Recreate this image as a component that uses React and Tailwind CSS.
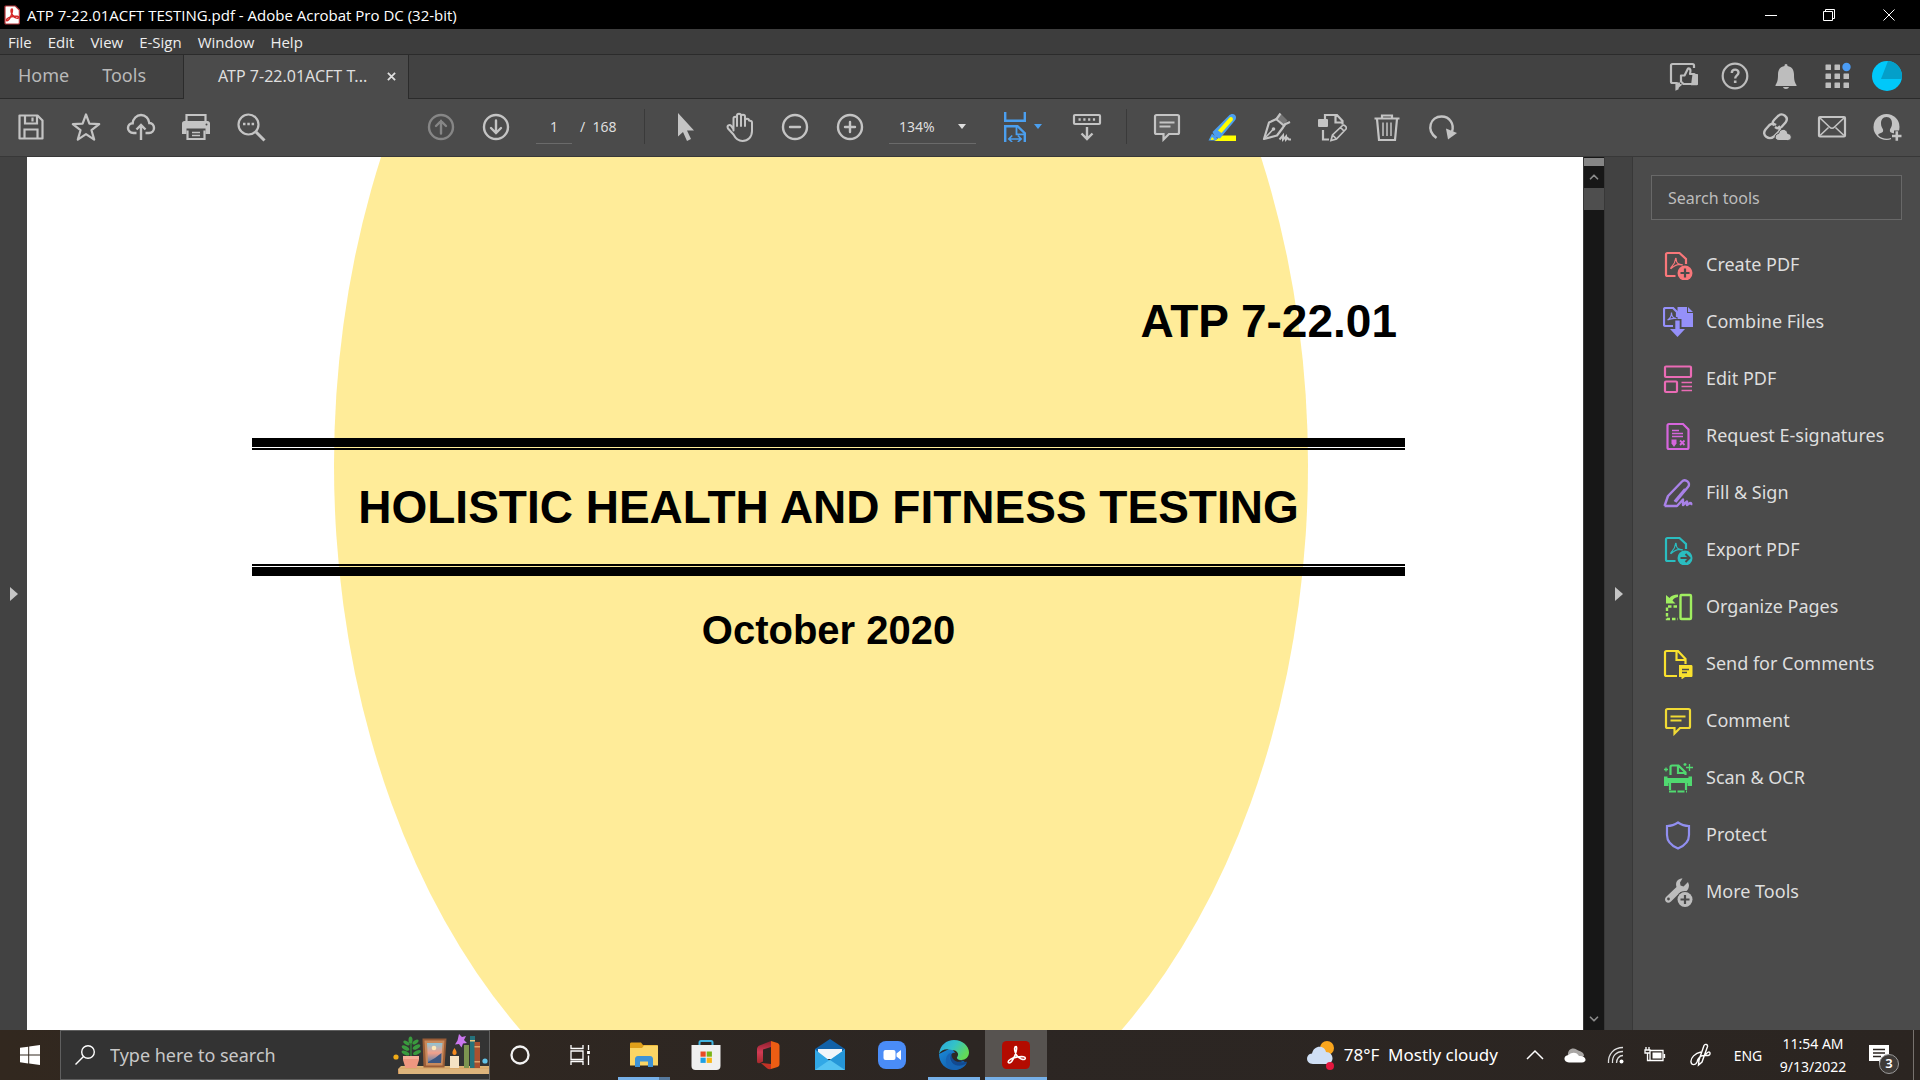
import React, { useState } from 'react';
import { ChevronUp, ChevronDown } from 'lucide-react';

const Icon = ({ children, className = 'h-[30px] w-[30px]' }) => (
  <svg viewBox="0 0 30 30" fill="none" stroke="currentColor" strokeWidth="2.200" className={`shrink-0 ${className}`} aria-hidden="true">
    {children}
  </svg>
);

// Acrobat "A" swoosh, reused by several icons
const Swoosh = ({ color = 'currentColor', width = 1.5 }) => (
  <path
    d="M15 6c-1.800 0-1.800 3-.8 6 .8 3 3.500 6 6.500 7.300 2.500 1 4.300.5 4.300-.8 0-1.600-3-2-6.500-1.600-4 .4-8 1.600-10 3-2.300 1.500-2.300 3.600-.8 3.600 2 0 4.800-4.500 6.300-8.500 1.500-3.800 2.300-9 1-9z"
    stroke={color}
    strokeWidth={width}
    fill="none"
  />
);

/* ---------- toolbar icons ---------- */

const SaveIcon = () => (
  <Icon>
    <path d="M3.500 3.500h18l5 5v18h-23z" strokeLinejoin="round" />
    <path d="M9 4v7.500h12V4M8.500 26v-8.500h13V26" />
    <path d="M16.500 5.500v4" />
  </Icon>
);

const StarIcon = () => (
  <Icon>
    <path d="M15 2.500l3.400 9.200 9.800.4-7.700 6.100 2.700 9.400-8.200-5.400-8.200 5.400 2.700-9.400-7.700-6.100 9.800-.4z" strokeLinejoin="round" />
  </Icon>
);

const CloudUpIcon = () => (
  <Icon>
    <path d="M10.500 21H7.500C4 21 2 18.500 2 16s2-4.800 4.700-4.800C7 7 10.500 3 15 3s8 3.500 8.300 8c3 .2 4.700 2.500 4.700 5s-2 5-5 5h-3.500" strokeWidth="2.400" />
    <path d="M15 28V13M10.500 17.500L15 13l4.500 4.500" strokeWidth="2.400" />
  </Icon>
);

const PrintIcon = () => (
  <Icon>
    <path d="M5.500 9V3h19v6" />
    <path d="M1 11.500C1 10 2 9 3.500 9h23c1.500 0 2.500 1 2.500 2.500V22h-4.500v-5.500h-19V22H1z" fill="currentColor" stroke="none" />
    <path d="M6.500 18.500v8.500h17v-8.500" />
    <path d="M11 20.500h8M11 23.500h8" strokeWidth="1.500" />
    <circle cx="25.500" cy="12.500" r="1" fill="#4b4b4b" stroke="none" />
  </Icon>
);

const FindIcon = () => (
  <Icon>
    <circle cx="12.500" cy="12.500" r="10" />
    <path d="M20 20l8.500 8.500" strokeWidth="3" />
    <path d="M7 12h2.500M11.300 12h2.500M15.600 12h2.500" strokeWidth="2.400" />
  </Icon>
);

const CircleIcon = ({ d }) => (
  <Icon>
    <circle cx="15" cy="15" r="12" strokeWidth="2.400" />
    <path d={d} strokeWidth="2.400" strokeLinecap="round" />
  </Icon>
);

const ArrowIcon = () => (
  <Icon>
    <path d="M8 1v23.500l5-4.500 4 9 4-2-4-8.500h7z" fill="currentColor" stroke="none" />
  </Icon>
);

const HandIcon = () => (
  <Icon>
    <path
      d="M8.500 18.500V6.500c0-2.500 3.500-2.500 3.500 0V14M12 7V3.500c0-2.500 4-2.500 4 0V14M16 4.500c0-2.500 4-2.300 4 0V14M20 8.500c0-2.300 4-2.300 4 0C24.500 9 27 8 27 10.500V19c0 6-4 10-9.500 10-5 0-7-2.500-9-6.500L3 16.500c-1.500-3 1.500-4.500 3.300-2.500l2.200 3.500"
      strokeLinecap="round"
      strokeLinejoin="round"
      strokeWidth="2"
    />
  </Icon>
);

const FitWidthIcon = () => (
  <svg viewBox="0 0 22 30" fill="none" stroke="currentColor" className="h-[30px] w-[22px] shrink-0" aria-hidden="true">
    <path d="M1.200 0v8.800h19.600V0" strokeWidth="2.400" />
    <path d="M1.200 30V14.200h12.300l7.300 7V30" strokeWidth="2.400" />
    <path d="M12.500 14.500v7.800h8" strokeWidth="1.800" />
    <path d="M5 27h12M8.200 23.500L4.800 27l3.400 3M13.800 23.500l3.400 3.500-3.400 3" strokeWidth="1.600" />
  </svg>
);

const ScrollModeIcon = () => (
  <Icon>
    <rect x="2" y="3" width="26" height="9" rx="1" />
    <path d="M6.500 7.500h18" strokeDasharray="2.200 2.600" strokeWidth="2.400" />
    <path d="M15 15v12M9.500 21.500L15 27l5.500-5.500" strokeWidth="2.400" />
  </Icon>
);

const CommentIcon = ({ fill = 'none' }) => (
  <Icon>
    <path d="M3 4.500C3 3.700 3.500 3 4.500 3h21c1 0 1.500.7 1.500 1.500v16c0 .8-.5 1.500-1.500 1.500H17l-5.500 5.500V22h-7C3.500 22 3 21.300 3 20.500z" fill={fill} />
    <path d="M7.500 10.500h15M7.500 14.500h11" strokeWidth="1.800" />
  </Icon>
);

const HighlightIcon = () => (
  <Icon>
    <path d="M7 29l8-5.500h14V29z" fill="#ffff00" stroke="none" />
    <path d="M1.500 28.500L5 21.500l5.500 5-2 2z" fill="#4b9fef" stroke="none" />
    <path d="M5.500 20L22 3.500c2-2 4.500-2 6-.5s1.500 4-.5 6L13 26.500 8 25z" fill="#4b9fef" stroke="none" />
    <path d="M11 18.500L22.500 5.500c1.500-1.500 4.500.5 3 3L14.500 21z" fill="#ffff00" stroke="none" />
    <path d="M3.500 28l1.500-3 2.500 2.500z" fill="#ffff00" stroke="none" />
  </Icon>
);

const PenNibIcon = () => (
  <Icon>
    <path d="M18.500 1.500l7 7-3.500 4.500-7-7z" fill="#767676" stroke="none" />
    <path d="M18.500 1.500L14.500 7 7 10.500 2 27l13-3.500 6-8 2-3.500" strokeLinejoin="round" />
    <path d="M13.500 6.500l9.500 8M22.500 12.500L28 10" />
    <path d="M3 26l8-8.500" strokeWidth="1.600" />
    <circle cx="11.500" cy="17" r="1.800" fill="currentColor" stroke="none" />
    <path d="M17.500 27.500l3.500-4v4l3-3v3l1.500-1.500 1.500 1.500H29" strokeWidth="2" />
  </Icon>
);

const EditPageIcon = () => (
  <Icon>
    <path d="M8 7V3h12l5.500 6v3.500M18.500 3v7.500H26" />
    <rect x="1" y="7" width="10" height="8" rx="1" fill="currentColor" stroke="none" />
    <path d="M6 18v9.500h6" />
    <path d="M14 28.500l1.500-5.500L25.500 13.500c1.500-1.500 5 2 3.500 3.500L19.500 27zM15.500 23l4 4M23.500 15.500l3.500 3.500" strokeWidth="1.700" />
  </Icon>
);

const TrashIcon = () => (
  <Icon>
    <path d="M2.500 6.500h25M10 6V3.500h10V6M5 7l2 21h16l2-21" />
    <path d="M11 10.500v13.500M15 10.500v13.500M19 10.500v13.500" strokeWidth="1.500" />
  </Icon>
);

const RotateIcon = () => (
  <Icon>
    <path d="M9.500 26C-1.500 18 3.500 4.500 14.500 4.500c8.500 0 13 8 10.500 15" strokeWidth="2.400" />
    <path d="M19 16.500l11 4.500-9 6.500z" fill="currentColor" stroke="none" />
  </Icon>
);

const LinkCloudIcon = () => (
  <Icon>
    <g strokeWidth="2.400" strokeLinejoin="round">
      <path d="M12 13.500c-2-2-1-4.500.5-6L16 4c4.500-4 11.500 1 7.500 6.500L19.500 15c-1.800 1.700-4.500 1.500-6.500 0" />
      <path d="M16.500 14c2 2 1.500 4.500 0 6L12 24.500C7 28.500-1 23.500 3.500 17.500L7.500 13c2-1.800 4.500-1.500 6.500 0" />
    </g>
    <path d="M17 28.500c-5 0-5-6.500-.3-7 1-5.500 8.300-5.500 9 0 5 .5 4.500 7 0 7z" fill="currentColor" stroke="#4b4b4b" strokeWidth="1" />
  </Icon>
);

const MailIcon = () => (
  <Icon>
    <rect x="2" y="5" width="26" height="19.500" rx="1" />
    <path d="M3 6l9.500 9c1.500 1.500 3.500 1.500 5 0L27 6M3 23.500l8.500-8M27 23.500l-8.500-8" strokeWidth="1.600" />
  </Icon>
);

const AddPersonIcon = () => (
  <Icon>
    <circle cx="14.500" cy="15" r="13" fill="currentColor" stroke="none" />
    <path d="M14.500 5c-4 0-5.500 3-5.500 6.500 0 3 1.300 4.500 2 6 .3 1.500 0 2.500-1 3-1.500.8-3.500 1-4 2.500 4.500 5 13.500 5 17 0-.5-1.500-2.500-1.700-4-2.500-1-.5-1.300-1.500-1-3 .7-1.500 2-3 2-6C20 8 18.500 5 14.500 5z" fill="#4b4b4b" stroke="none" />
    <path d="M19 24.500h12M25 18.500v12" stroke="#4b4b4b" strokeWidth="6" />
    <path d="M20 24h9.500M24.800 19.300v9.500" strokeWidth="2.600" />
  </Icon>
);

/* ---------- header icons ---------- */

const FeedbackIcon = () => (
  <Icon>
    <path d="M11 22.500H8.500v5l-1 .5V22H3.500C2.500 22 2 21.500 2 20.500v-16C2 3.500 2.500 3 3.500 3h20c1 0 1.500.5 1.500 1.500V7" />
    <path d="M7.500 22v6.500l6-5" fill="currentColor" stroke="none" />
    <path d="M12 14.500h3.500L19 7.500c2.500-.5 3 1.500 2 5.500h4c1 0 1 1 1 2l-1.500 8H14.500L12 20.500z" strokeLinejoin="round" />
    <path d="M23.500 13H28c.8 0 1 .5 1 1v9c0 .8-.5 1.200-1 1.200h-6z" fill="currentColor" stroke="none" />
  </Icon>
);

const HelpIcon = () => (
  <Icon>
    <circle cx="15" cy="15" r="12.300" />
    <path d="M11.800 12c0-4.500 6.700-4.200 6.700-.5 0 3-3.300 2.700-3.300 6" strokeWidth="2.400" />
    <path d="M15.200 19.500V22" strokeWidth="2.600" />
  </Icon>
);

const BellIcon = () => (
  <Icon>
    <path d="M15 3c1.200 0 1.500.8 1.500 2 4.500.8 6.500 4 6.500 8.500 0 5 .5 7.500 2.500 10.500v1h-21v-1C6.500 21 7 18.500 7 13.500 7 9 9 5.800 13.500 5c0-1.200.3-2 1.500-2zM12 26h6c-.5 2.500-5.500 2.500-6 0z" fill="currentColor" stroke="none" />
  </Icon>
);

const AppsIcon = () => (
  <Icon>
    {[3.5, 12.5, 21.5].map((y) =>
      [3.5, 12.5, 21.5].map((x) => (
        <rect key={`${x}-${y}`} x={x} y={y} width="5.500" height="5.500" rx="0.500" fill="currentColor" stroke="none" />
      ))
    )}
    <circle cx="24.500" cy="6" r="5" fill="#424242" stroke="none" />
    <circle cx="24.500" cy="6" r="4.200" fill="#4b9cf5" stroke="none" />
  </Icon>
);

/* ---------- tools panel icons ---------- */

const PdfPage = () => (
  <>
    <path d="M12.500 26H4.500C3.500 26 3 25.500 3 24.500v-20C3 3.500 3.500 3 4.500 3h12L23 9v5" />
    <path d="M8 18.500c-1.500-.5 4-3.500 4.500-9.500 0-1 .8-.8.700.5 0 4 3 5.500 6.500 5.300-3-1-8 .5-11.700 3.700z" strokeWidth="1.200" />
  </>
);

const CreatePdfIcon = () => (
  <Icon>
    <PdfPage />
    <circle cx="22" cy="23" r="7.500" fill="currentColor" stroke="none" />
    <path d="M17.500 23h9M22 18.500v9" stroke="#4b4b4b" />
  </Icon>
);

const ExportPdfIcon = () => (
  <Icon>
    <PdfPage />
    <circle cx="22" cy="23" r="7.500" fill="currentColor" stroke="none" />
    <path d="M17.500 23h8.500M22.500 19l4 4-4 4" stroke="#4b4b4b" strokeWidth="2" />
  </Icon>
);

const CombineIcon = () => (
  <Icon>
    <path d="M10 19H2.500C1.500 19 1 18.500 1 17.500v-15C1 1.500 1.500 1 2.500 1H10l4 4v5" />
    <path d="M4.500 13c3-1.500 4-4 4-7.500 0 3.500 2 6 5 6-3-.5-6 0-9 1.500z" strokeWidth="1.200" />
    <path d="M14.500 0H24v6h6v14H18.500v-8h-4zM25 0l5 5h-5z" fill="currentColor" stroke="none" />
    <path d="M12.300 13.500h4.400v8.500h5.300l-7.500 8-7.500-8h5.300z" fill="currentColor" stroke="none" />
  </Icon>
);

const EditPdfIcon = () => (
  <Icon>
    <rect x="2" y="2.500" width="26" height="10.500" rx="1" />
    <rect x="2" y="17.500" width="12" height="10.500" rx="1" />
    <path d="M18.500 18.500H29M18.500 22.500H29M18.500 26.500H29" strokeWidth="1.400" />
  </Icon>
);

const RequestSignIcon = () => (
  <Icon>
    <path d="M4.500 4.500c0-1 .5-1.500 1.500-1.500h14l5.500 5.500v18c0 1-.5 1.500-1.500 1.500H6c-1 0-1.500-.5-1.500-1.500z" />
    <path d="M9 9.500h7M9 12.500h11M9 15.500h11" strokeWidth="1.300" />
    <path d="M8.500 18.500h5v4l-2.500 3.500-2.500-3.500z" fill="currentColor" stroke="none" />
    <path d="M17 19.500l4.500 4.500M21.500 19.500L17 24" strokeWidth="1.800" />
  </Icon>
);

const FillSignIcon = () => (
  <Icon>
    <path d="M1.500 28l3.500-10L19 3.500c3-3.500 9.500 1.500 6 5.500L12.500 24M1.500 28H14l6-6.500V27l4-3.500V27l3-2c1.500 0 1.500 1 1 2" strokeWidth="2.400" strokeLinejoin="round" />
    <path d="M11.500 23.500L22 11" />
  </Icon>
);

const OrganizeIcon = () => (
  <Icon>
    <rect x="17.500" y="3" width="10.500" height="24" rx="1" strokeWidth="2.400" />
    <path d="M14 14.500H4V27h11" strokeDasharray="3.500 2" strokeWidth="2.400" />
    <path d="M3 3v8.500h9.500l-3-3C10.500 6.500 12 5.500 15 5V2.500c-4 0-7 1.500-8.500 3.500z" fill="currentColor" stroke="none" />
  </Icon>
);

const SendCommentsIcon = () => (
  <Icon>
    <path d="M14 27H3.500C2.500 27 2 26.500 2 25.500V3.500c0-1 .5-1.500 1.500-1.500H15l7.500 8v5M13.500 2.500V11H22" />
    <path d="M16 16h12c1 0 1.500.5 1.500 1.500v9c0 1-.5 1.500-1.500 1.500h-6l-3.500 2.500V28H16z" fill="currentColor" stroke="none" />
    <path d="M19 20.500h7M19 23.500h5" stroke="#4b4b4b" strokeWidth="1.300" />
  </Icon>
);

const ScanIcon = () => (
  <Icon>
    <path d="M7.500 12V4c0-1 .5-1.500 1.500-1.500h6.500l7 7V12M15 3v7h7" />
    <path d="M1 13.500h3.500v1.500h21v-1.500H29V23h-4.500v-3h-19v3H1z" fill="currentColor" stroke="none" />
    <path d="M7 20v8M23 20v8M6 28.500h18" strokeDasharray="7 1.500" />
    <path d="M26.500 1v7M23 4.500h7M22 0v3M20.500 1.500h3M3 4.500v4M1 6.500h4" strokeWidth="1.300" />
  </Icon>
);

const ShieldIcon = () => (
  <Icon>
    <path d="M15 2.500c3.500 2.500 7 3.500 11 3.500v9c0 7-5 11-11 13.500C9 26 4 22 4 15V6c4 0 7.500-1 11-3.500z" />
  </Icon>
);

const MoreToolsIcon = () => (
  <Icon>
    <path d="M19.500 1.500c-5 0-7.500 4-6 8.500L3.500 19.500c-4 4 1 8.500 4.500 5l9.500-9.500c5 1.500 8.500-2 8.500-7l-1-3-4.500 4.500-3-1-.5-3z" fill="currentColor" stroke="none" />
    <circle cx="5.500" cy="22" r="1.400" fill="#4b4b4b" stroke="none" />
    <circle cx="22" cy="22.500" r="8.500" fill="#4b4b4b" stroke="none" />
    <circle cx="22" cy="22.500" r="7.500" fill="currentColor" stroke="none" />
    <path d="M17.500 22.500h9M22 18v9" stroke="#4b4b4b" />
  </Icon>
);

const tools = [
  { name: 'Create PDF', icon: CreatePdfIcon, color: 'text-[#f9777a]' },
  { name: 'Combine Files', icon: CombineIcon, color: 'text-[#9590f9]' },
  { name: 'Edit PDF', icon: EditPdfIcon, color: 'text-[#ea6bb5]' },
  { name: 'Request E-signatures', icon: RequestSignIcon, color: 'text-[#d666dd]' },
  { name: 'Fill & Sign', icon: FillSignIcon, color: 'text-[#a982e8]' },
  { name: 'Export PDF', icon: ExportPdfIcon, color: 'text-[#2abdc0]' },
  { name: 'Organize Pages', icon: OrganizeIcon, color: 'text-[#a0ee60]' },
  { name: 'Send for Comments', icon: SendCommentsIcon, color: 'text-[#f9e12e]' },
  { name: 'Comment', icon: CommentIcon, color: 'text-[#f0da35]' },
  { name: 'Scan & OCR', icon: ScanIcon, color: 'text-[#50d970]' },
  { name: 'Protect', icon: ShieldIcon, color: 'text-[#918ff0]' },
  { name: 'More Tools', icon: MoreToolsIcon, color: 'text-[#bdbdbd]' },
];

/* ---------- taskbar icons ---------- */

const WindowsLogo = () => (
  <svg viewBox="0 0 20 20" className="h-5 w-5" fill="#fff" aria-hidden="true">
    <path d="M0 2.800l8.200-1.100v7.900H0zM9.200 1.500L20 0v9.600H9.200zM0 10.500h8.200v7.900L0 17.200zM9.200 10.500H20V20L9.200 18.500z" />
  </svg>
);

const ShelfArt = () => (
  <svg viewBox="0 0 98 48" className="h-12 w-[98px] shrink-0" aria-hidden="true">
    <defs>
      <linearGradient id="sunset" x1="0" y1="0" x2="0" y2="1">
        <stop offset="0" stopColor="#8fc4d6" />
        <stop offset="0.500" stopColor="#f2a08a" />
        <stop offset="1" stopColor="#4f7fae" />
      </linearGradient>
      <linearGradient id="wood" x1="0" y1="0" x2="0" y2="1">
        <stop offset="0" stopColor="#e0b778" />
        <stop offset="1" stopColor="#c98d54" />
      </linearGradient>
    </defs>
    <path d="M10 35h88v8H7v-5z" fill="url(#wood)" />
    <path d="M8 38h90v5H8z" fill="#ddb47c" />
    <circle cx="5" cy="26" r="2.600" fill="#f0ab17" />
    <circle cx="94" cy="30" r="2.600" fill="#63c3e8" />
    <path d="M20 26V9" stroke="#2f8038" strokeWidth="1.500" />
    <g fill="#3a9a3e">
      <ellipse cx="19.500" cy="9" rx="2" ry="3.500" />
      <ellipse cx="15.500" cy="12" rx="3.500" ry="1.700" transform="rotate(30 15.500 12)" />
      <ellipse cx="24.500" cy="11" rx="3.500" ry="1.700" transform="rotate(-35 24.500 11)" />
      <ellipse cx="14.500" cy="17" rx="4.200" ry="1.900" transform="rotate(30 14.500 17)" />
      <ellipse cx="25.500" cy="16" rx="4.200" ry="1.900" transform="rotate(-30 25.500 16)" />
      <ellipse cx="14.500" cy="22" rx="4.200" ry="1.900" transform="rotate(25 14.500 22)" />
      <ellipse cx="26" cy="21.500" rx="4.200" ry="1.900" transform="rotate(-25 26 21.500)" />
    </g>
    <path d="M12 25h16v4l-2.500 8h-11L12 29z" fill="#ef9780" />
    <path d="M12 25h16v3H12z" fill="#f6ae98" />
    <path d="M31.500 7.500h24l-2 29h-21z" fill="#9a5d37" />
    <path d="M33.500 9.500h20l-2 25H35z" fill="#c98a5c" />
    <path d="M36 12h15.500l-1.500 20H37z" fill="url(#sunset)" />
    <path d="M37 31l7-4 6.500-5-.5 10H37z" fill="#3c5580" />
    <circle cx="43" cy="17" r="2.300" fill="#ffe9b8" />
    <path d="M59 25h9v12h-9z" fill="#f4e2c4" />
    <path d="M63.500 17c3 4 2.500 7 0 7s-3-3 0-7z" fill="#f58b1f" />
    <path d="M68 3l3 3 4-1-2 4 3 3-4 .5-1.500 4-2.500-3.500-4 .5 2.500-4z" fill="#cb77ee" />
    <path d="M73 14h5v23h-5z" fill="#7d9550" />
    <path d="M79 5h5v32h-5z" fill="#25727c" />
    <path d="M79 9h5v1.500h-5z" fill="#e7c27a" />
    <path d="M83.500 11h5.500v26h-5.500z" fill="#a8502f" />
    <path d="M83.500 15h5.500v1.500h-5.500zM83.500 30h5.500v1.500h-5.500z" fill="#e0a36a" />
  </svg>
);

const CortanaIcon = () => (
  <svg viewBox="0 0 20 20" className="h-5 w-5" fill="none" stroke="#f2f2f2" strokeWidth="2.300" aria-hidden="true">
    <circle cx="10" cy="10" r="8.500" />
  </svg>
);

const TaskViewIcon = () => (
  <svg viewBox="0 0 20 20" className="h-5 w-5" fill="none" stroke="#fff" strokeWidth="1.300" aria-hidden="true">
    <path d="M1 0v3.500h12V0M1 6h12v8.500H1zM1 20v-3.500h12V20M18.500 0v5M18.500 10.500V20" />
    <path d="M18.500 6v3" strokeWidth="2.800" />
  </svg>
);

const ExplorerIcon = () => (
  <svg viewBox="0 0 30 30" className="h-[30px] w-[30px]" aria-hidden="true">
    <path d="M1 4c0-1 .5-1.500 1.500-1.500H12L14 5h13.500c1 0 1.500.5 1.500 1.500V13H1z" fill="#e0a01a" />
    <path d="M1 8h12l2-2.500h14v20H1z" fill="#fbd564" />
    <path d="M6 27v-8c0-1.500 1-3 3-3h12c2 0 3 1.500 3 3v8h-5v-5.500h-8V27z" fill="#3e93d6" />
  </svg>
);

const StoreIcon = () => (
  <svg viewBox="0 0 30 34" className="h-[34px] w-[30px]" aria-hidden="true">
    <path d="M8.500 9V4.500c0-1 .5-1.500 1.500-1.500h10c1 0 1.500.5 1.500 1.500V9" fill="none" stroke="#41b3e0" strokeWidth="2" />
    <path d="M.5 7h29v21c0 2.500-1.500 4-4 4h-21c-2.500 0-4-1.500-4-4z" fill="#f0f0f0" />
    <path d="M9.500 13.500h5.200v5.200H9.500z" fill="#e84a25" />
    <path d="M15.700 13.500h5.200v5.200h-5.200z" fill="#7ab416" />
    <path d="M9.500 19.700h5.200v5.200H9.500z" fill="#1da0e5" />
    <path d="M15.700 19.700h5.200v5.200h-5.200z" fill="#f8b515" />
  </svg>
);

const OfficeIcon = () => (
  <svg viewBox="0 0 24 30" className="h-[30px] w-6" aria-hidden="true">
    <defs>
      <linearGradient id="office" x1="0" y1="0" x2="0" y2="1">
        <stop offset="0" stopColor="#8d1f2d" />
        <stop offset="0.500" stopColor="#d23b55" />
        <stop offset="1" stopColor="#a72a2c" />
      </linearGradient>
    </defs>
    <path d="M15 1L3.500 5.500C2 6 1 7.500 1 9v12c0 2 1 2.500 3 2l3-1.500V9.500L15 7z" fill="url(#office)" />
    <path d="M15 1l6.500 2c1.200.5 2 1.500 2 3v18c0 1.500-.8 2.500-2 3L15 29z" fill="#ec5d13" />
    <path d="M5 23l10 1v5c-2 .5-3 0-4-.7z" fill="#c23226" />
  </svg>
);

const MailAppIcon = () => (
  <svg viewBox="0 0 32 32" className="h-8 w-8" aria-hidden="true">
    <path d="M16 0l15 10v8H1v-8z" fill="#1061a8" />
    <path d="M4 10h24v10H4z" fill="#f1f5f9" />
    <path d="M1 10.500L16 22l15-11.500V31H1z" fill="#31a8e6" />
    <path d="M31 10.500L1 31h30z" fill="#55c3f2" />
    <path d="M16 21l15 10V10.500z" fill="#2596d8" />
  </svg>
);

const ZoomAppIcon = () => (
  <svg viewBox="0 0 28 28" className="h-7 w-7" aria-hidden="true">
    <rect width="28" height="28" rx="8" fill="#4a8cf7" />
    <rect x="5.500" y="9" width="12" height="10" rx="2" fill="#fff" />
    <path d="M18.500 12.500l4.500-3.500v10l-4.500-3.500z" fill="#fff" />
  </svg>
);

const EdgeIcon = () => (
  <svg viewBox="0 0 30 30" className="h-[30px] w-[30px]" aria-hidden="true">
    <defs>
      <linearGradient id="edgeTop" x1="0" y1="0" x2="1" y2="0.500">
        <stop offset="0" stopColor="#2aa5e0" />
        <stop offset="0.500" stopColor="#33c2c8" />
        <stop offset="1" stopColor="#63d957" />
      </linearGradient>
      <linearGradient id="edgeBase" x1="0" y1="0" x2="1" y2="1">
        <stop offset="0" stopColor="#1b8ddb" />
        <stop offset="1" stopColor="#104e9c" />
      </linearGradient>
    </defs>
    <path d="M0 14c0 9 6.500 16 15 16 5.500 0 10-2.500 12.500-6.500L20 17 12 8z" fill="url(#edgeBase)" />
    <path d="M12.500 13c-4 5-1.500 12.500 6.500 13 3.500 0 6.500-1 8.700-2.800C25 27.500 20 30 15.500 30 8 29 5.500 22 7.500 17c1-2.500 3-4 5-4z" fill="#1664b4" />
    <path d="M12.500 13.500c-3 4-.5 11.500 6.500 12 3.500.3 6.500-.8 8.500-2.500 1-1 .5-1.500-.5-1.200-5 1.700-9.500-.5-9.500-3.800z" fill="#13498f" />
    <path d="M0 14C1 5 7.500 0 15 0c8.500 0 15 6 15 12.500 0 4.500-3.500 7.500-7.500 7.500-3.500 0-5.500-1.500-4-3.500 2-3-1-6.500-5.500-6.500C7 8 2 10 0 14z" fill="url(#edgeTop)" />
    <path d="M13 13.500c2-1.500 5.500-.5 5.800 1.500 0 1.500-1.300 2-.8 3.500 1 2 4.500 2.500 7 1.500-2 2.500-8 2.500-10.500-.5-1.700-2-2.300-4-1.500-6z" fill="#2e2824" />
  </svg>
);

const AcrobatIcon = () => (
  <svg viewBox="0 0 30 30" className="h-7 w-7" aria-hidden="true">
    <rect width="30" height="30" rx="5" fill="#b30b00" />
    <Swoosh color="#fff" width={1.7} />
  </svg>
);

const apps = [
  { name: 'File Explorer', icon: ExplorerIcon, state: 'stacked' },
  { name: 'Microsoft Store', icon: StoreIcon },
  { name: 'Office', icon: OfficeIcon },
  { name: 'Mail', icon: MailAppIcon },
  { name: 'Zoom', icon: ZoomAppIcon },
  { name: 'Microsoft Edge', icon: EdgeIcon, state: 'open' },
  { name: 'Adobe Acrobat', icon: AcrobatIcon, state: 'active' },
];

const WeatherIcon = () => (
  <svg viewBox="0 0 30 30" className="h-[30px] w-[30px]" aria-hidden="true">
    <circle cx="21" cy="8" r="7" fill="#f9a51d" />
    <path d="M7 24C-1 24-.5 14 6 13.500 8 4.500 18.500 5 20 12c8 0 9 11.500 1 12z" fill="#cfdff5" />
    <circle cx="24" cy="26" r="4" fill="#e3173e" />
  </svg>
);

/* ---------- layout ---------- */

const TitleBar = () => (
  <header className="flex h-[29px] shrink-0 items-center bg-black text-white">
    <svg viewBox="0 0 30 30" className="ml-0.5 h-5 w-5" aria-hidden="true">
      <path d="M6 1.500h14l6 6V27c0 1-.5 1.500-1.500 1.500H6c-1 0-1.500-.5-1.500-1.500V3c0-1 .5-1.500 1.500-1.500z" fill="#fff" stroke="#b8383c" strokeWidth="1.800" />
      <Swoosh color="#d62a2a" width={2.2} />
    </svg>
    <h1 className="ml-[5px] grow font-['Open_Sans','Noto_Sans',sans-serif] text-[15px] leading-5">
      ATP 7-22.01ACFT TESTING.pdf - Adobe Acrobat Pro DC (32-bit)
    </h1>
    <div className="flex h-full">
      {[
        { name: 'Minimize', d: 'M0 6.500h12' },
        { name: 'Restore', d: 'M.5 2.500h9v9h-9zM2.500 2.500v-2h9v9h-2' },
        { name: 'Close', d: 'M.5.5l11 11M11.500.5l-11 11' },
      ].map((b) => (
        <button key={b.name} aria-label={b.name} className="flex w-[58px] items-center justify-center last:w-[62px]">
          <svg viewBox="0 0 12 12" className="h-3 w-3" fill="none" stroke="#fff" aria-hidden="true">
            <path d={b.d} />
          </svg>
        </button>
      ))}
    </div>
  </header>
);

const MenuBar = () => (
  <nav className="flex h-[26px] shrink-0 items-center gap-4 border-b border-[#2b2b2b] bg-[#3d3d3d] pl-2 font-['Open_Sans','Noto_Sans',sans-serif] text-[15px] leading-5 text-[#ededed]">
    {['File', 'Edit', 'View', 'E-Sign', 'Window', 'Help'].map((m) => (
      <button key={m}>{m}</button>
    ))}
  </nav>
);

const TabBar = () => (
  <div className="flex h-11 shrink-0 bg-[#424242] text-[18px] text-[#b9b9b9]">
    <div className="flex w-[183px] items-center gap-[33px] border-b border-[#2b2b2b] pb-0.5 pl-[18px]">
      <button>Home</button>
      <button>Tools</button>
    </div>
    <div className="flex w-[226px] items-center border-x border-[#2b2b2b] bg-[#4b4b4b] pb-0.5 pl-[34px] text-[16px] text-[#dedede]">
      <button className="w-[169px] text-left whitespace-nowrap">ATP 7-22.01ACFT T...</button>
      <button aria-label="Close tab" className="flex h-5 w-3 items-center">
        <svg viewBox="0 0 10 10" className="h-[9px] w-[9px]" stroke="currentColor" strokeWidth="2" aria-hidden="true">
          <path d="M1 1l8 8M9 1L1 9" />
        </svg>
      </button>
    </div>
    <div className="flex grow items-center justify-end border-b border-[#2b2b2b] pr-2 pb-0.5 text-[#bdbdbd]">
      {[
        { name: 'Feedback', icon: FeedbackIcon },
        { name: 'Help', icon: HelpIcon },
        { name: 'Notifications', icon: BellIcon },
        { name: 'Apps', icon: AppsIcon },
      ].map(({ name, icon: I }) => (
        <button key={name} aria-label={name} className="flex w-[51px] justify-center">
          <I />
        </button>
      ))}
      <button aria-label="Account" className="flex w-[50px] justify-center">
        <svg viewBox="0 0 30 30" className="h-[30px] w-[30px]" aria-hidden="true">
          <circle cx="15" cy="15" r="15" fill="#00c8fa" />
          <path d="M16 .1A15 15 0 0 1 29.700 18H9z" fill="#049fc9" />
        </svg>
      </button>
    </div>
  </div>
);

const ToolButton = ({ name, children, className = 'w-[55px]' }) => (
  <button aria-label={name} className={`flex shrink-0 items-center justify-center ${className}`}>
    {children}
  </button>
);

const Divider = () => <div className="mx-3 h-[35px] w-px shrink-0 bg-[#3a3a3a]" />;

const Caret = () => (
  <svg viewBox="0 0 8 5" className="h-[5px] w-2" fill="currentColor" aria-hidden="true">
    <path d="M0 0h8L4 5z" />
  </svg>
);

const Toolbar = () => {
  const [page, setPage] = useState('1');

  return (
    <div className="flex h-[58px] shrink-0 items-center border-b border-[#383838] bg-[#4b4b4b] pb-0.5 pl-[3px] text-[14px] text-[#c4c4c4]">
      <ToolButton name="Save"><SaveIcon /></ToolButton>
      <ToolButton name="Star"><StarIcon /></ToolButton>
      <ToolButton name="Upload"><CloudUpIcon /></ToolButton>
      <ToolButton name="Print"><PrintIcon /></ToolButton>
      <ToolButton name="Find"><FindIcon /></ToolButton>
      <ToolButton name="Previous page" className="ml-[135px] w-[55px] text-[#868686]">
        <CircleIcon d="M15 21.500V9M10 14l5-5 5 5" />
      </ToolButton>
      <ToolButton name="Next page"><CircleIcon d="M15 8.500V21M10 16l5 5 5-5" /></ToolButton>
      <input
        aria-label="Page number"
        value={page}
        onChange={(e) => setPage(e.target.value)}
        className="ml-[13px] h-[34px] w-9 border-b border-[#6a6a6a] bg-transparent text-center text-[#dedede] outline-none"
      />
      <span className="ml-2 w-[52px] whitespace-pre text-[#dedede]">/  168</span>
      <Divider />
      <ToolButton name="Select"><ArrowIcon /></ToolButton>
      <ToolButton name="Hand"><HandIcon /></ToolButton>
      <ToolButton name="Zoom out"><CircleIcon d="M10 15h10" /></ToolButton>
      <ToolButton name="Zoom in"><CircleIcon d="M10 15h10M15 10v10" /></ToolButton>
      <label className="ml-3 flex h-[34px] w-[87px] items-center border-b border-[#6a6a6a] pl-2.5 text-[#dedede]">
        <select aria-label="Zoom level" defaultValue="134%" className="w-[59px] appearance-none bg-transparent outline-none">
          <option>100%</option>
          <option>134%</option>
          <option>200%</option>
        </select>
        <Caret />
      </label>
      <ToolButton name="Fit width" className="ml-7 w-[38px] gap-2 text-[#4b9fef]">
        <FitWidthIcon />
        <Caret />
      </ToolButton>
      <ToolButton name="Scrolling mode" className="ml-[17px] w-[55px]"><ScrollModeIcon /></ToolButton>
      <Divider />
      <ToolButton name="Comment"><CommentIcon fill="#606060" /></ToolButton>
      <ToolButton name="Highlight"><HighlightIcon /></ToolButton>
      <ToolButton name="Sign"><PenNibIcon /></ToolButton>
      <ToolButton name="Edit"><EditPageIcon /></ToolButton>
      <ToolButton name="Delete"><TrashIcon /></ToolButton>
      <ToolButton name="Rotate"><RotateIcon /></ToolButton>
      <div className="ml-auto flex pr-1.5">
        <ToolButton name="Share link"><LinkCloudIcon /></ToolButton>
        <ToolButton name="Email"><MailIcon /></ToolButton>
        <ToolButton name="Add people"><AddPersonIcon /></ToolButton>
      </div>
    </div>
  );
};

const DocumentPage = () => (
  <main className="relative min-w-0 grow overflow-hidden bg-white text-black">
    <svg viewBox="0 0 974 1436" className="absolute -top-[410px] left-1/2 ml-4 h-[1436px] w-[974px] -translate-x-1/2" aria-hidden="true">
      <ellipse cx="487" cy="718" rx="487" ry="718" fill="#ffec99" />
    </svg>
    <article className="relative flex flex-col pt-[140px] pr-[178px] pl-[225px] text-center font-['Liberation_Sans',Arial,sans-serif] text-[46px] leading-[48px] font-bold">
      <p className="pr-2 text-right">ATP 7-22.01</p>
      <div className="mt-[93px] h-[12px] border-t-[9px] border-b-2 border-black" />
      <h2 className="my-[33px] whitespace-nowrap">HOLISTIC HEALTH AND FITNESS TESTING</h2>
      <div className="h-[12px] border-t-2 border-b-[9px] border-black" />
      <p className="mt-[30px] text-[40px]">October 2020</p>
    </article>
  </main>
);

const Scrollbar = () => (
  <div className="flex w-[22px] shrink-0 flex-col border-x border-[#383838] bg-[#171717] text-[#8a8a8a]">
    <div className="mt-px h-2 bg-[#858585]" />
    <button aria-label="Scroll up" className="flex h-[22px] items-center justify-center">
      <ChevronUp size={14} strokeWidth={3} />
    </button>
    <div className="h-[22px] bg-[#4e4e4e]" />
    <button aria-label="Scroll down" className="mt-auto flex h-[22px] items-center justify-center">
      <ChevronDown size={14} strokeWidth={3} />
    </button>
  </div>
);

const PanelHandle = ({ name, className }) => (
  <button aria-label={name} className={`flex shrink-0 items-center justify-center bg-[#424242] text-[#c4c4c4] ${className}`}>
    <svg viewBox="0 0 8 14" className="h-3.5 w-2" fill="currentColor" aria-hidden="true">
      <path d="M0 0l8 7-8 7z" />
    </svg>
  </button>
);

const ToolsPanel = () => (
  <aside className="flex w-[287px] shrink-0 flex-col bg-[#4b4b4b] px-[18px] pt-[18px]">
    <input
      aria-label="Search tools"
      placeholder="Search tools"
      className="h-[45px] shrink-0 border border-[#686868] bg-[#464646] px-4 text-[16px] text-[#dedede] outline-none placeholder:text-[#bdbdbd]"
    />
    <ul className="mt-4">
      {tools.map(({ name, icon: I, color }) => (
        <li key={name}>
          <button className="flex h-[57px] w-full items-center gap-[13px] pl-3 text-[18px] whitespace-nowrap text-[#dedede]">
            <span className={color}><I /></span>
            {name}
          </button>
        </li>
      ))}
    </ul>
  </aside>
);

const TaskbarApp = ({ name, icon: I, state }) => (
  <button aria-label={name} className={`flex h-full w-[62px] flex-col items-center ${state === 'active' ? 'bg-[#575350]' : ''}`}>
    <span className="flex grow items-center pt-[3px]"><I /></span>
    {state === 'stacked' && (
      <span className="flex h-[3px] w-[52px]">
        <span className="grow bg-[#76b0e8]" />
        <span className="w-[11px] bg-[#56799c]" />
      </span>
    )}
    {state === 'open' && <span className="h-[3px] w-[52px] bg-[#76b0e8]" />}
    {state === 'active' && <span className="h-[3px] w-full bg-[#76b0e8]" />}
    {!state && <span className="h-[3px]" />}
  </button>
);

const Tray = () => (
  <div className="ml-auto flex h-full items-center text-white">
    <button className="flex items-center gap-2 text-[17px] whitespace-pre">
      <WeatherIcon />
      78°F  Mostly cloudy
    </button>
    <button aria-label="Show hidden icons" className="ml-7">
      <svg viewBox="0 0 18 18" className="h-[18px] w-[18px]" fill="none" stroke="#fff" strokeWidth="1.500" aria-hidden="true">
        <path d="M1 13l8-8 8 8" />
      </svg>
    </button>
    <button aria-label="OneDrive" className="ml-5">
      <svg viewBox="0 0 22 16" className="h-4 w-[22px]" aria-hidden="true">
        <path d="M4 9C3 2 9 0 12.500 2.500 14 4 20 4 20 9L11 12z" fill="#a9a6a4" />
        <path d="M5 15.500c-6 0-6-7-.5-7.500C8 4.500 13 5 15 9c7-1 9 6.500 3 6.500z" fill="#fff" />
      </svg>
    </button>
    <button aria-label="Network" className="ml-[21px]">
      <svg viewBox="0 0 18 18" className="h-[18px] w-[18px]" fill="none" stroke="#dedede" strokeWidth="1.300" aria-hidden="true">
        <path d="M1.500 17C1 8 7 1.500 16 1.500M5.500 17C5 10 9 5.500 16 5.500M9.500 17c0-4 2.500-7.500 6.500-7.500" />
        <circle cx="14.500" cy="15.500" r="2" fill="#fff" stroke="none" />
      </svg>
    </button>
    <button aria-label="Battery" className="ml-[19px]">
      <svg viewBox="0 0 22 18" className="h-[18px] w-[22px]" fill="none" stroke="#fff" strokeWidth="1.300" aria-hidden="true">
        <path d="M6 4.500h13v10H6zM20.500 8v4M2 1v3M5 1v3M1 4h5v3H1zM3.500 7v7.500H6" />
        <path d="M8.500 6.500h9v6h-9z" fill="#fff" stroke="none" />
      </svg>
    </button>
    <button aria-label="Pen workspace" className="ml-[23px]">
      <svg viewBox="0 0 22 24" className="h-6 w-[22px]" fill="none" stroke="#fff" strokeWidth="1.400" aria-hidden="true">
        <path d="M9.500 22l.5-5L15 2.500c1-2 4-1 3.500 1L13 19zM12 9C6 10 1.500 15 2 19c.5 3.500 4.500 3.500 6 0 1-3.500 2.500-6.500 7-6.500 3.500 0 6.500.5 6-2.500-.5-2-2.500-1-4.500 1.500" />
      </svg>
    </button>
    <button className="ml-[22px] w-[30px] text-center text-[14px]">ENG</button>
    <button className="ml-3 flex w-[76px] flex-col items-center text-[14px] leading-[23px] whitespace-nowrap">
      <span>11:54 AM</span>
      <span>9/13/2022</span>
    </button>
    <button aria-label="Notifications, 3 new" className="relative ml-[18px] h-full w-8">
      <svg viewBox="0 0 20 20" className="absolute top-[15px] left-0 h-5 w-5" aria-hidden="true">
        <path d="M0 0h20v16h-6l-4 4v-4H0z" fill="#fff" />
        <path d="M4 4.500h12M4 8h12M4 11.500h8" stroke="#2b2521" strokeWidth="1.300" />
      </svg>
      <span className="absolute top-6 left-2.5 flex h-5 w-5 items-center justify-center rounded-full border border-[#9a9a9a] bg-[#3f3b38] text-[13px] font-semibold">
        3
      </span>
    </button>
    <div className="ml-3 h-full w-[7px] border-l border-[#77726e]" />
  </div>
);

const Taskbar = () => (
  <footer className="flex h-[50px] shrink-0 items-center bg-linear-to-r from-[#32281f] via-[#2c2623] to-[#2b2521]">
    <button aria-label="Start" className="flex h-full w-[60px] items-center justify-center">
      <WindowsLogo />
    </button>
    <label className="flex h-full w-[430px] items-center border border-[#5f5f5f] bg-[#333333] pl-3.5">
      <svg viewBox="0 0 20 20" className="h-5 w-5 shrink-0" fill="none" stroke="#fff" strokeWidth="1.400" aria-hidden="true">
        <circle cx="13" cy="7" r="6.300" />
        <path d="M8.500 11.500L.5 19.500" />
      </svg>
      <input
        aria-label="Type here to search"
        placeholder="Type here to search"
        className="ml-[15px] min-w-0 grow bg-transparent text-[18px] text-white outline-none placeholder:text-[#c8c8c8]"
      />
      <ShelfArt />
    </label>
    <button aria-label="Cortana" className="flex h-full w-[60px] items-center justify-center"><CortanaIcon /></button>
    <button aria-label="Task view" className="flex h-full w-[60px] items-center justify-center"><TaskViewIcon /></button>
    <div className="ml-[3px] flex h-full">
      {apps.map((app) => (
        <TaskbarApp key={app.name} {...app} />
      ))}
    </div>
    <Tray />
  </footer>
);

const App = () => {
  return (
    <div className="flex h-screen flex-col overflow-hidden bg-[#424242] font-['Noto_Sans','Open_Sans',sans-serif]">
      <TitleBar />
      <MenuBar />
      <TabBar />
      <Toolbar />
      <div className="flex min-h-0 grow">
        <PanelHandle name="Show navigation pane" className="w-[27px]" />
        <DocumentPage />
        <Scrollbar />
        <PanelHandle name="Collapse tools pane" className="w-7 border-r border-[#383838]" />
        <ToolsPanel />
      </div>
      <Taskbar />
    </div>
  );
};

export default App;
